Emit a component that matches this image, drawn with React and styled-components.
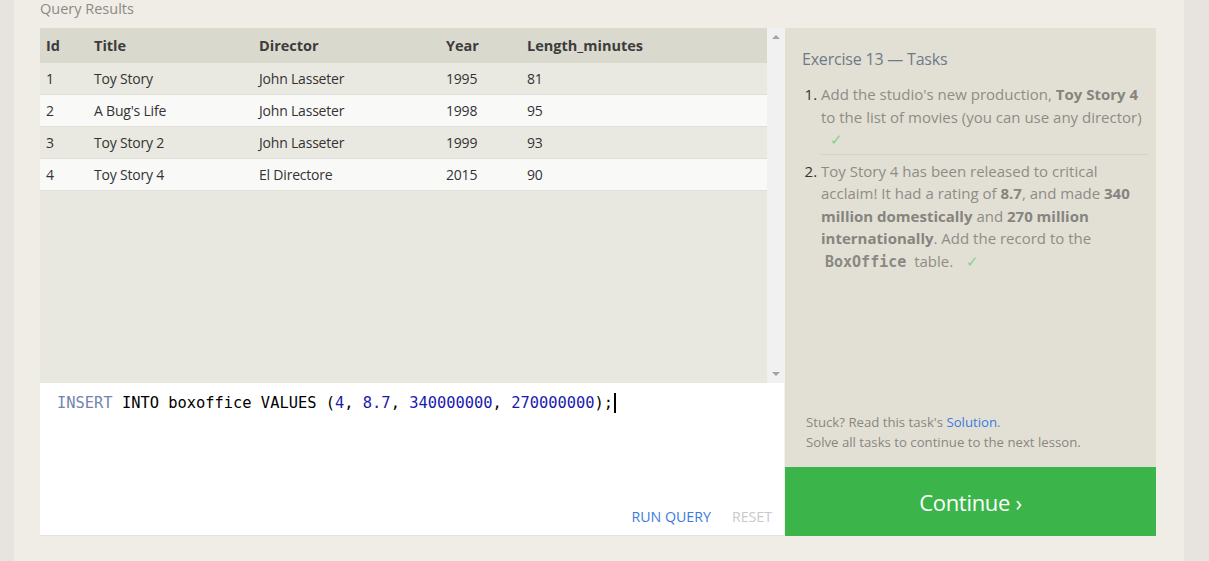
import React from "react";
import styled, { createGlobalStyle } from "styled-components";

const Global = createGlobalStyle`
  html, body { margin: 0; padding: 0; }
  body { background: #e6e3df; font-family: "Open Sans", "Noto Sans", sans-serif; }
`;

const Page = styled.div`
  display: flex;
  width: 1209px;
  height: 561px;
  overflow: hidden;
  background: #e6e3df;
`;

const Gutter = styled.div`
  width: ${(p) => p.$w}px;
  flex: none;
  background: #e7e4e0;
`;

const Main = styled.main`
  width: 1170px;
  flex: none;
  background: #efede6;
  padding: 0 27px 0 26px;
  box-sizing: border-box;
`;

const SectionTitle = styled.div`
  height: 28px;
  font-size: 14.5px;
  line-height: 18px;
  color: #8c8a86;
`;

const Workspace = styled.div`
  display: grid;
  grid-template-columns: 744px 1px 371px;
  grid-template-rows: 355px 153px;
`;

const Results = styled.div`
  display: flex;
  background: #e9e8e0;
  grid-column: 1;
  grid-row: 1;
`;

const TableWrap = styled.div`
  flex: 1;
`;

const Table = styled.table`
  width: 100%;
  border-collapse: collapse;
  font-size: 14px;
  color: #333;
`;

const Th = styled.th`
  text-align: left;
  font-weight: 700;
  color: #3c3c3c;
  height: 35px;
  padding: 0 0 0 ${(p) => p.$pl || 0}px;
  width: ${(p) => (p.$w ? `${p.$w}px` : "auto")};
  background: #dad9cd;
  font-size: 14.5px;
`;

const Tr = styled.tr`
  background: ${(p) => (p.$even ? "#f9f9f8" : "#eae9e1")};
  border-bottom: 1px solid #e0dfda;
`;

const Td = styled.td`
  height: 31px;
  padding: 0 0 0 ${(p) => p.$pl || 0}px;
  font-weight: 400;
  letter-spacing: -0.2px;
`;

const Scrollbar = styled.div`
  width: 17px;
  flex: none;
  background: #f1f1f1;
  display: flex;
  flex-direction: column;
  justify-content: space-between;
  align-items: center;
  padding: 7px 0;
  box-sizing: border-box;
`;

const Arrow = styled.div`
  width: 0;
  height: 0;
  border-left: 4px solid transparent;
  border-right: 4px solid transparent;
  ${(p) =>
    p.$down
      ? "border-top: 4px solid #a3a3a3;"
      : "border-bottom: 4px solid #a3a3a3;"}
`;

const Divider = styled.div`
  grid-column: 2;
  grid-row: 1 / span 2;
  background: #f3f2ee;
`;

const Editor = styled.div`
  grid-column: 1;
  grid-row: 2;
  background: #fff;
  border-bottom: 1px solid #e4e2dc;
  display: flex;
  flex-direction: column;
  justify-content: space-between;
  box-sizing: border-box;
`;

const Code = styled.div`
  font-family: "DejaVu Sans Mono", "Liberation Mono", monospace;
  font-size: 15.4px;
  line-height: 20px;
  padding: 10px 0 0 17px;
  color: #000;
  white-space: pre;
`;

const Tok = styled.span`
  color: ${(p) => p.$c};
`;

const Caret = styled.span`
  display: inline-block;
  width: 2px;
  height: 20px;
  background: #000;
  vertical-align: top;
  margin-left: 1px;
`;

const Actions = styled.div`
  display: flex;
  justify-content: flex-end;
  gap: 21px;
  padding: 0 12px 9px 0;
`;

const Action = styled.span`
  font-size: 14.2px;
  color: ${(p) => (p.$muted ? "#c9c9cc" : "#3b7ae0")};
`;

const Tasks = styled.aside`
  grid-column: 3;
  grid-row: 1 / span 2;
  display: flex;
  flex-direction: column;
`;

const TaskPanel = styled.div`
  flex: 1;
  background: #e2e0d5;
  padding: 21px 8px 0 17px;
  display: flex;
  flex-direction: column;
  box-sizing: border-box;
`;

const ExerciseTitle = styled.h3`
  margin: 0;
  font-weight: 400;
  font-size: 16px;
  line-height: 20px;
  color: #6e7987;
  letter-spacing: -0.2px;
`;

const List = styled.ol`
  margin: 14px 0 0;
  padding: 0 0 0 19px;
`;

const Item = styled.li`
  font-size: 15px;
  line-height: 22.5px;
  color: #8f8c86;
  padding: 0 0 3px 0;
  margin-bottom: 5px;
  border-bottom: ${(p) => (p.$last ? "none" : "1px solid #d5d3c8")};
  &::marker { color: #333; }
  b { font-weight: 700; color: #86847e; }
`;

const Mono = styled.code`
  font-family: "DejaVu Sans Mono", "Liberation Mono", monospace;
  font-weight: 700;
  font-size: 15px;
  line-height: 1;
  color: #8a8882;
  padding: 0 4px;
`;

const Check = styled.span`
  color: #86cf8c;
  margin-left: 9px;
`;

const Help = styled.div`
  margin-top: auto;
  padding: 0 0 15px 4px;
  font-size: 13.2px;
  line-height: 20px;
  color: #8a8680;
  a { color: #3b7ae0; text-decoration: none; }
`;

const ContinueBtn = styled.div`
  height: 69px;
  background: #3bb54a;
  color: #fff;
  font-size: 22px;
  display: flex;
  align-items: center;
  justify-content: center;
  letter-spacing: -0.3px;
`;

const rows = [
  [1, "Toy Story", "John Lasseter", 1995, 81],
  [2, "A Bug's Life", "John Lasseter", 1998, 95],
  [3, "Toy Story 2", "John Lasseter", 1999, 93],
  [4, "Toy Story 4", "El Directore", 2015, 90],
];

export default function App() {
  return (
    <>
      <Global />
      <Page>
        <Gutter $w={14} />
        <Main>
          <SectionTitle>Query Results</SectionTitle>
          <Workspace>
            <Results>
              <TableWrap>
                <Table>
                  <thead>
                    <tr>
                      <Th $w={48} $pl={6}>Id</Th>
                      <Th $w={165}>Title</Th>
                      <Th $w={187}>Director</Th>
                      <Th $w={81}>Year</Th>
                      <Th>Length_minutes</Th>
                    </tr>
                  </thead>
                  <tbody>
                    {rows.map((r, i) => (
                      <Tr key={r[0]} $even={i % 2 === 1}>
                        <Td $pl={6}>{r[0]}</Td>
                        <Td>{r[1]}</Td>
                        <Td>{r[2]}</Td>
                        <Td>{r[3]}</Td>
                        <Td>{r[4]}</Td>
                      </Tr>
                    ))}
                  </tbody>
                </Table>
              </TableWrap>
              <Scrollbar>
                <Arrow />
                <Arrow $down />
              </Scrollbar>
            </Results>
            <Divider />
            <Editor>
              <Code>
                <Tok $c="#7483b0">INSERT</Tok> INTO boxoffice VALUES (
                <Tok $c="#1a1ab0">4</Tok>, <Tok $c="#1a1ab0">8.7</Tok>,{" "}
                <Tok $c="#1a1ab0">340000000</Tok>,{" "}
                <Tok $c="#1a1ab0">270000000</Tok>);
                <Caret />
              </Code>
              <Actions>
                <Action>RUN QUERY</Action>
                <Action $muted>RESET</Action>
              </Actions>
            </Editor>
            <Tasks>
              <TaskPanel>
                <ExerciseTitle>Exercise 13 — Tasks</ExerciseTitle>
                <List>
                  <Item>
                    Add the studio's new production, <b>Toy Story 4</b> to the
                    list of movies (you can use any director) <Check>✓</Check>
                  </Item>
                  <Item $last>
                    Toy Story 4 has been released to critical acclaim! It had a
                    rating of <b>8.7</b>, and made <b>340 million domestically</b>{" "}
                    and <b>270 million internationally</b>. Add the record to the{" "}
                    <Mono>BoxOffice</Mono> table. <Check>✓</Check>
                  </Item>
                </List>
                <Help>
                  Stuck? Read this task's <a>Solution</a>.
                  <br />
                  Solve all tasks to continue to the next lesson.
                </Help>
              </TaskPanel>
              <ContinueBtn>Continue ›</ContinueBtn>
            </Tasks>
          </Workspace>
        </Main>
        <Gutter $w={25} />
      </Page>
    </>
  );
}
